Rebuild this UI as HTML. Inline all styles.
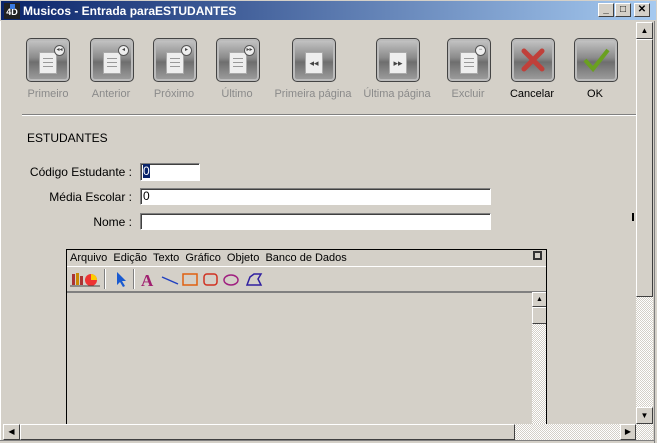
<!DOCTYPE html>
<html style="width:657px;height:443px;overflow:hidden"><head><meta charset="utf-8"><style>
*{margin:0;padding:0;box-sizing:border-box}
body{width:657px;height:443px;background:#d4d0c8;font-family:"Liberation Sans",sans-serif;font-size:11px;position:relative;overflow:hidden}
.abs{position:absolute}
#title{left:0;top:0;width:657px;height:21px;background:linear-gradient(to right,#0a246a,#a6caf0);color:#fff;font-weight:bold;font-size:12px;line-height:21px;padding-left:22px;border:1px solid #d4d0c8}
.tb{top:3px;width:16px;height:14px;background:#d4d0c8;border:1px solid;border-color:#fff #404040 #404040 #fff;color:#000;font-size:10px;text-align:center;line-height:12px;font-weight:bold}
.btn{top:38px;width:44px;height:44px;border-radius:5px;background:linear-gradient(#c8c8c8,#8a8a8a 45%,#6e6e6e 55%,#a0a0a0);border:1px solid #444;box-shadow:inset 0 0 0 2px #bbb}
.doc{position:absolute;left:12px;top:13px;width:18px;height:22px;background:#eee;border:1px solid #aaa}
.doc i{position:absolute;left:3px;right:3px;height:1px;background:#999}
.bd{position:absolute;left:27px;top:6px;width:11px;height:11px;border-radius:50%;background:#eee;border:1px solid #555;font-size:6px;line-height:9px;text-align:center;color:#444}
.lbl{top:88px;width:90px;text-align:center;color:#8a8a8a;font-size:11px}
.fld{background:#fff;border:1px solid;border-color:#808080 #fff #fff #808080;box-shadow:inset 1px 1px 0 #404040}
.lab{text-align:right;width:120px;font-size:12px}
.sb{background:#d4d0c8;border:1px solid;border-color:#fff #404040 #404040 #fff}
.chk{background-color:#fff;background-image:repeating-conic-gradient(#d4d0c8 0 25%,#fff 0 50%);background-size:2px 2px}
</style></head><body>
<div id="title" class="abs">Musicos - Entrada paraESTUDANTES</div>
<div class="abs" style="left:4px;top:3px;width:16px;height:16px;background:#222;color:#fff;font-size:9px;font-weight:bold;line-height:18px;text-align:center">4D<span style="position:absolute;left:6px;top:1px;width:5px;height:5px;background:#3a7ae0"></span></div>
<div class="abs tb" style="left:598px">_</div>
<div class="abs tb" style="left:615px">□</div>
<div class="abs tb" style="left:634px">✕</div>

<div class="abs btn" style="left:26px"><div class="doc"><i style="top:5px"></i><i style="top:9px"></i><i style="top:13px"></i></div><div class="bd">◂◂</div></div>
<div class="abs btn" style="left:90px"><div class="doc"><i style="top:5px"></i><i style="top:9px"></i><i style="top:13px"></i></div><div class="bd">◂</div></div>
<div class="abs btn" style="left:153px"><div class="doc"><i style="top:5px"></i><i style="top:9px"></i><i style="top:13px"></i></div><div class="bd">▸</div></div>
<div class="abs btn" style="left:216px"><div class="doc"><i style="top:5px"></i><i style="top:9px"></i><i style="top:13px"></i></div><div class="bd">▸▸</div></div>
<div class="abs btn" style="left:292px"><div class="doc" style="color:#444;font-size:9px;text-align:center;line-height:20px">◂◂</div></div>
<div class="abs btn" style="left:376px"><div class="doc" style="color:#444;font-size:9px;text-align:center;line-height:20px">▸▸</div></div>
<div class="abs btn" style="left:447px"><div class="doc"><i style="top:5px"></i><i style="top:9px"></i><i style="top:13px"></i></div><div class="bd">−</div></div>
<div class="abs btn" style="left:511px"><svg width="42" height="42" style="position:absolute;left:0;top:0"><path d="M12 12L30 30M30 12L12 30" stroke="#c0403a" stroke-width="5" stroke-linecap="round"/></svg></div>
<div class="abs btn" style="left:574px"><svg width="42" height="42" style="position:absolute;left:0;top:0"><path d="M10 21L18 30L33 11" stroke="#6aa020" stroke-width="4" fill="none"/></svg></div>

<div class="abs lbl" style="left:3px">Primeiro</div>
<div class="abs lbl" style="left:66px">Anterior</div>
<div class="abs lbl" style="left:129px">Próximo</div>
<div class="abs lbl" style="left:192px">Último</div>
<div class="abs lbl" style="left:268px">Primeira página</div>
<div class="abs lbl" style="left:352px">Última página</div>
<div class="abs lbl" style="left:423px">Excluir</div>
<div class="abs lbl" style="left:487px;color:#000">Cancelar</div>
<div class="abs lbl" style="left:550px;color:#000">OK</div>

<div class="abs" style="left:22px;top:114px;width:614px;height:2px;border-top:1px solid #808080;border-bottom:1px solid #fff"></div>
<div class="abs" style="left:27px;top:131px;font-size:12px">ESTUDANTES</div>
<div class="abs lab" style="left:12px;top:165px">Código Estudante :</div>
<div class="abs lab" style="left:12px;top:190px">Média Escolar :</div>
<div class="abs lab" style="left:12px;top:215px">Nome :</div>
<div class="abs fld" style="left:140px;top:163px;width:60px;height:18px;font-size:12px;padding-left:2px"><span style="background:#0a246a;color:#fff">0</span></div>
<div class="abs fld" style="left:140px;top:188px;width:351px;height:17px;font-size:12px;padding-left:2px">0</div>
<div class="abs fld" style="left:140px;top:213px;width:351px;height:17px"></div>

<div class="abs" style="left:66px;top:249px;width:481px;height:175px;border:1px solid #000;border-bottom:none"></div>
<div class="abs" style="left:70px;top:252px;font-size:11px">Arquivo&nbsp; Edição&nbsp; Texto&nbsp; Gráfico&nbsp; Objeto&nbsp; Banco de Dados</div>
<div class="abs" style="left:533px;top:251px;width:9px;height:9px;border:2px solid #333"></div>
<div class="abs" style="left:67px;top:266px;width:479px;height:1px;background:#fff"></div>
<div class="abs" style="left:67px;top:291px;width:479px;height:2px;background:#808080"></div>
<svg class="abs" style="left:70px;top:268px" width="200" height="22">
<rect x="2" y="6" width="3" height="11" fill="#a33"/><rect x="6" y="5" width="3" height="12" fill="#c80"/><rect x="10" y="8" width="3" height="9" fill="#a33"/>
<circle cx="21" cy="12" r="6" fill="#e33"/><path d="M21 12L21 6A6 6 0 0 1 27 12Z" fill="#fc0"/>
<line x1="0" y1="18" x2="30" y2="18" stroke="#444"/>
<rect x="34" y="1" width="1" height="20" fill="#808080"/><rect x="35" y="1" width="1" height="20" fill="#fff"/>
<path d="M47 4L47 17L50 14L53 19L55 18L52 13L56 13Z" fill="#1a5ad0"/>
<rect x="63" y="1" width="1" height="20" fill="#808080"/><rect x="64" y="1" width="1" height="20" fill="#fff"/>
<text x="71" y="18" font-family="Liberation Serif,serif" font-size="17" font-weight="bold" fill="#a02070">A</text>
<line x1="92" y1="9" x2="108" y2="16" stroke="#2040c0" stroke-width="1.5"/>
<rect x="113" y="6" width="14" height="11" fill="none" stroke="#e06010" stroke-width="1.5"/>
<rect x="134" y="6" width="13" height="11" rx="3" fill="none" stroke="#d03020" stroke-width="1.5"/>
<ellipse cx="161" cy="12" rx="7" ry="5" fill="none" stroke="#a02080" stroke-width="1.5"/>
<path d="M177 17L180 9L184 6L191 6L188 11L191 17Z" fill="none" stroke="#3020a0" stroke-width="1.5"/>
</svg>
<div class="abs sb" style="left:532px;top:292px;width:15px;height:15px;font-size:7px;text-align:center;line-height:13px">▲</div>
<div class="abs sb" style="left:532px;top:307px;width:15px;height:17px"></div>
<div class="abs chk" style="left:532px;top:324px;width:14px;height:100px"></div>
<div class="abs" style="left:546px;top:249px;width:1px;height:175px;background:#000"></div>

<div class="abs" style="left:0;top:21px;width:2px;height:422px;border-left:1px solid #fff"></div>
<div class="abs sb" style="left:636px;top:22px;width:17px;height:17px;font-size:8px;text-align:center;line-height:15px">▲</div>
<div class="abs sb" style="left:636px;top:39px;width:17px;height:258px"></div>
<div class="abs chk" style="left:636px;top:297px;width:17px;height:110px"></div>
<div class="abs sb" style="left:636px;top:407px;width:17px;height:17px;font-size:8px;text-align:center;line-height:15px">▼</div>
<div class="abs" style="left:632px;top:213px;width:2px;height:8px;background:#000"></div>
<div class="abs sb" style="left:3px;top:424px;width:17px;height:16px;font-size:8px;text-align:center;line-height:14px">◀</div>
<div class="abs sb" style="left:20px;top:424px;width:495px;height:16px"></div>
<div class="abs chk" style="left:515px;top:424px;width:105px;height:16px"></div>
<div class="abs sb" style="left:620px;top:424px;width:16px;height:16px;font-size:8px;text-align:center;line-height:14px">▶</div>
<div class="abs chk" style="left:636px;top:424px;width:17px;height:16px"></div>
<div class="abs" style="left:0;top:440px;width:657px;height:3px;border-top:1px solid #808080;background:#d4d0c8"></div>
<div class="abs" style="left:654px;top:21px;width:3px;height:422px;border-left:1px solid #808080;background:#d4d0c8"></div>
</body></html>
